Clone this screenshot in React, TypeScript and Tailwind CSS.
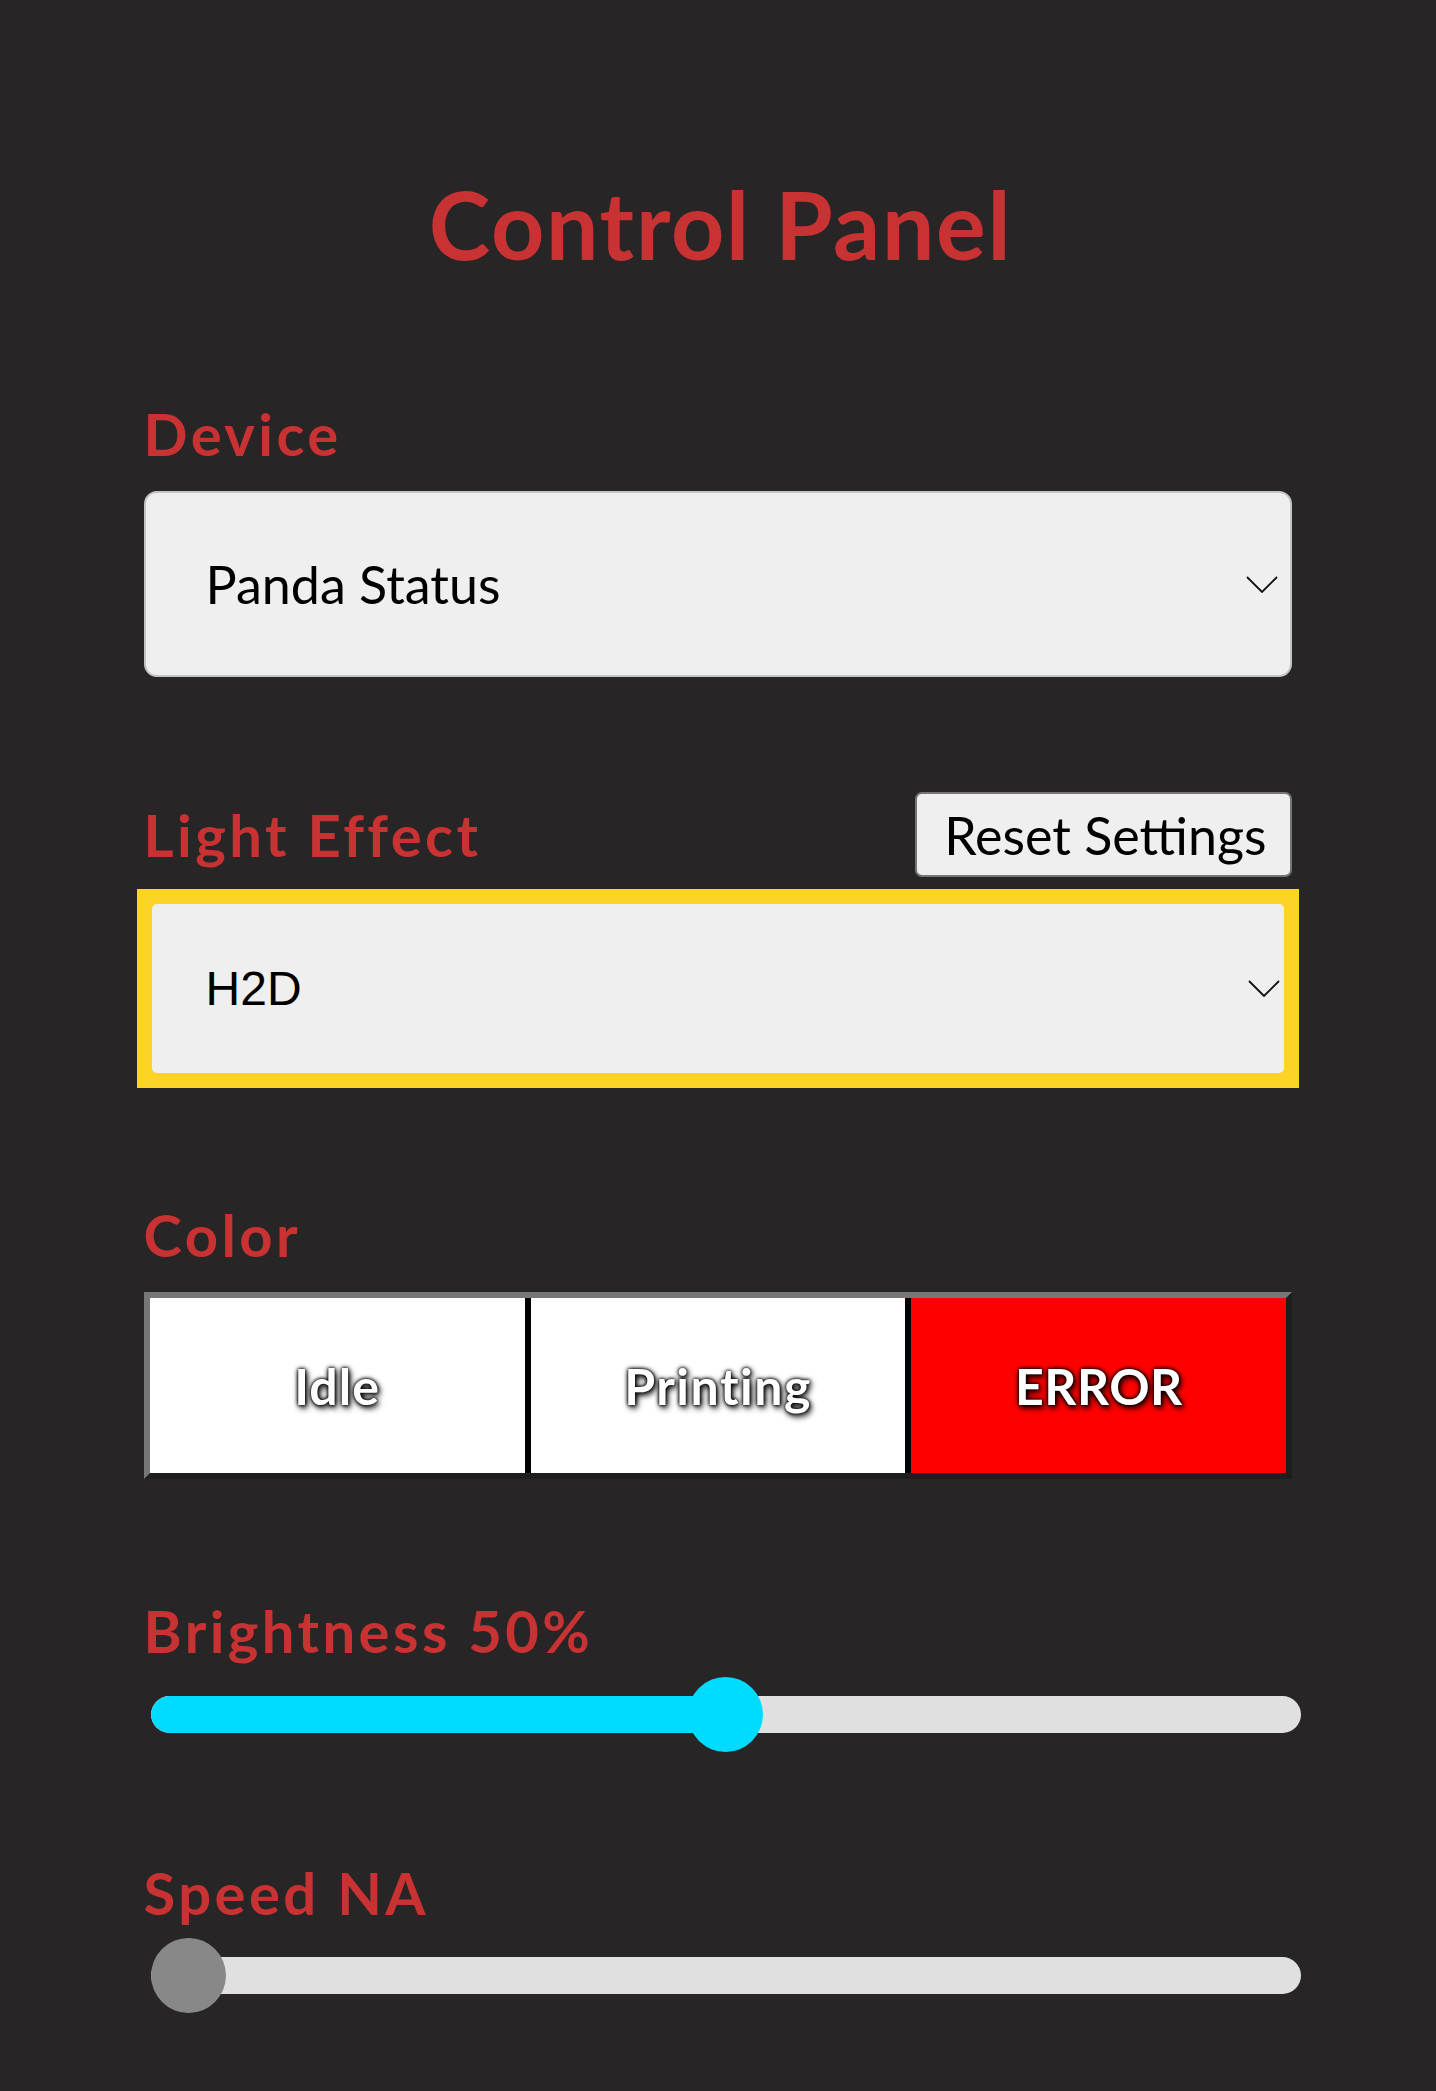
import React from "react";

function Chevron() {
  return (
    <svg width="32" height="17" viewBox="0 0 32 17" className="shrink-0">
      <polyline points="1,1 16,16 31,1" fill="none" stroke="#111" strokeWidth="1.8" />
    </svg>
  );
}

function Label({ children, className = "" }: { children: React.ReactNode; className?: string }) {
  return (
    <div className={"text-[58px] leading-none font-bold tracking-[3.4px] text-[#c93232] " + className}>{children}</div>
  );
}

function Slider({ value, active }: { value: number; active: boolean }) {
  const thumb = 75;
  return (
    <div className="relative ml-[7px] w-[calc(100%+2px)] h-[75px] flex items-center">
      <div className="w-full h-[37px] rounded-full bg-[#e0e0e0] overflow-hidden flex">
        {active && (
          <div
            className="h-full bg-[#00dcff] rounded-full"
            style={{ width: `calc(${value}% + ${thumb / 2 - (thumb * value) / 100}px)` }}
          />
        )}
      </div>
      <div
        className={
          "absolute top-0 h-[75px] w-[75px] rounded-full " + (active ? "bg-[#00dcff]" : "bg-[#888888]")
        }
        style={{ left: `calc(${value}% - ${(thumb * value) / 100}px)` }}
      />
    </div>
  );
}

export default function App() {
  return (
    <div className="min-h-[2091px] bg-[#272526] font-['Lato',sans-serif]">
      <div className="mx-auto w-[80%] pt-[178px] pb-[78px] flex flex-col">
        <h1 className="pl-[5px] text-center text-[93px] leading-none font-bold tracking-[1.7px] text-[#c93232]">Control Panel</h1>

        <Label className="mt-[134px]">Device</Label>
        <div className="mt-[28px] h-[186px] rounded-[13px] border-2 border-[#c4c4c4] bg-[#efefef] flex items-center justify-between pl-[60px] pr-[12px]">
          <span className="text-[52px] leading-none text-black">Panda Status</span>
          <Chevron />
        </div>

        <div className="mt-[115px] h-[85px] flex items-center justify-between">
          <Label>Light Effect</Label>
          <button className="h-[85px] w-[377px] rounded-[7px] border-2 border-[#767676] bg-[#efefef] text-[52px] leading-none text-black font-['Lato',sans-serif] pl-[3px]">
            Reset Settings
          </button>
        </div>

        <div className="mt-[19px] h-[185px] border-[8px] border-[#fdd426] outline-[7px] outline-solid outline-[#fdd426] bg-[#fdd426]">
          <div className="h-full rounded-[5px] bg-[#efefef] flex items-center justify-between pl-[54px] pr-[4px]">
            <span className="text-[48px] leading-none text-black font-['Liberation_Sans',Arial,sans-serif]">H2D</span>
            <Chevron />
          </div>
        </div>

        <Label className="mt-[125px]">Color</Label>
        <div className="mt-[28px] h-[187px] border-[6px] border-t-[#777777] border-l-[#777777] border-b-[#1f1e1e] border-r-[#1f1e1e] bg-black grid grid-cols-3 gap-[6px]">
          <div className="bg-white flex items-center justify-center">
            <span className="text-[50px] leading-none font-bold tracking-[1px] text-white [text-shadow:2px_3px_6px_#000,0_0_5px_#000,0_0_3px_#000]">Idle</span>
          </div>
          <div className="bg-white flex items-center justify-center">
            <span className="text-[50px] leading-none font-bold tracking-[1.5px] text-white [text-shadow:2px_3px_6px_#000,0_0_5px_#000,0_0_3px_#000]">Printing</span>
          </div>
          <div className="bg-[#ff0000] flex items-center justify-center">
            <span className="text-[50px] leading-none font-bold tracking-[0.5px] text-white [text-shadow:2px_3px_6px_#000,0_0_5px_#000,0_0_3px_#000]">ERROR</span>
          </div>
        </div>

        <Label className="mt-[123px]">Brightness 50%</Label>
        <div className="mt-[17px]">
          <Slider value={50} active />
        </div>

        <Label className="mt-[112px]">Speed NA</Label>
        <div className="mt-[16px]">
          <Slider value={0} active={false} />
        </div>
      </div>
    </div>
  );
}
